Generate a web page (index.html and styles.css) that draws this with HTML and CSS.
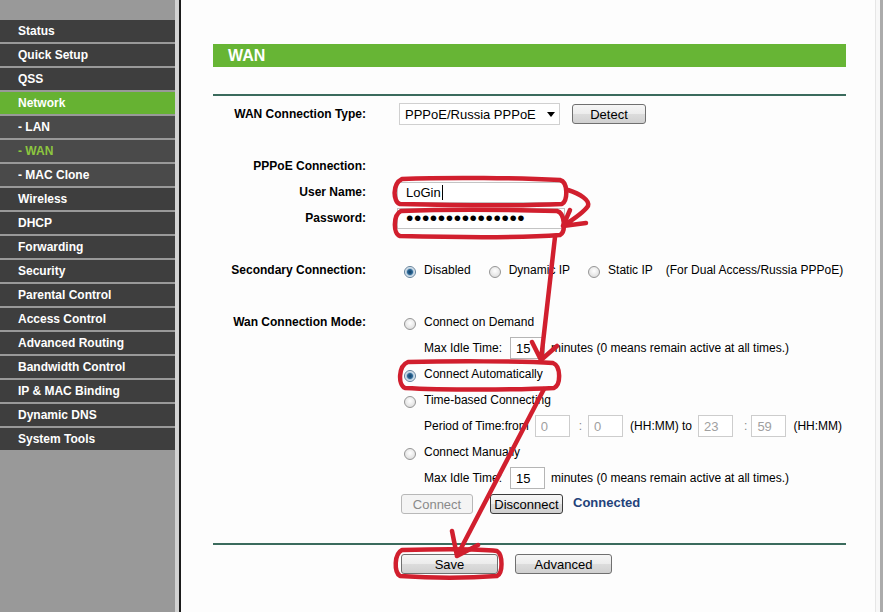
FILE: index.html
```html
<!DOCTYPE html>
<html lang="en">
  <head>
    <meta charset="UTF-8" />
    <meta name="viewport" content="width=device-width, initial-scale=1.0" />
    <title>WAN</title>
    <link rel="stylesheet" href="styles.css">
  </head>
  <body>
    <div class="page">
      <div class="sidebar">
        <ul class="menu">
          <li>Status</li>
          <li>Quick Setup</li>
          <li>QSS</li>
          <li class="open">Network</li>
          <li class="sub">- LAN</li>
          <li class="sub current">- WAN</li>
          <li class="sub">- MAC Clone</li>
          <li>Wireless</li>
          <li>DHCP</li>
          <li>Forwarding</li>
          <li>Security</li>
          <li>Parental Control</li>
          <li>Access Control</li>
          <li>Advanced Routing</li>
          <li>Bandwidth Control</li>
          <li>IP &amp; MAC Binding</li>
          <li>Dynamic DNS</li>
          <li>System Tools</li>
        </ul>
      </div>

      <div class="main">
        <div class="panel">
          <div class="title">WAN</div>
          <div class="rule"></div>

          <div class="form">
            <div class="label">WAN Connection Type:</div>
            <div class="field">
              <div class="select">
                <span>PPPoE/Russia PPPoE</span>
                <svg width="8" height="5" viewBox="0 0 8 5"><path d="M0 0h8L4 5z" fill="#000"/></svg>
              </div>
              <button class="btn detect">Detect</button>
            </div>

            <div class="gap"></div>

            <div class="label">PPPoE Connection:</div>
            <div class="field"></div>

            <div class="label">User Name:</div>
            <div class="field">
              <div class="text-input">LoGin<span class="cursor"></span></div>
            </div>

            <div class="label">Password:</div>
            <div class="field">
              <input class="text-input password" type="password" value="passwordpasswor" />
            </div>

            <div class="gap"></div>

            <div class="label">Secondary Connection:</div>
            <div class="field">
              <label class="choice"><input class="radio" type="radio" name="second" checked />Disabled</label>
              <label class="choice"><input class="radio" type="radio" name="second" />Dynamic IP</label>
              <label class="choice"><input class="radio" type="radio" name="second" />Static IP</label>
              <span>(For Dual Access/Russia PPPoE)</span>
            </div>

            <div class="gap"></div>

            <div class="label">Wan Connection Mode:</div>
            <div class="field">
              <label class="choice"><input class="radio" type="radio" name="mode" />Connect on Demand</label>
            </div>
            <div class="field indent">
              Max Idle Time:<input class="num" type="text" value="15" />minutes (0 means remain active at all times.)
            </div>
            <div class="field">
              <label class="choice"><input class="radio" type="radio" name="mode" checked />Connect Automatically</label>
            </div>
            <div class="field">
              <label class="choice"><input class="radio" type="radio" name="mode" />Time-based Connecting</label>
            </div>
            <div class="field indent">
              Period of Time:from<input class="num from-h" type="text" value="0" disabled />
              <span class="colon">:</span><input class="num from-m" type="text" value="0" disabled />
              (HH:MM) to<input class="num to-h" type="text" value="23" disabled />
              <span class="colon">:</span><input class="num to-m" type="text" value="59" disabled />
              (HH:MM)
            </div>
            <div class="field">
              <label class="choice"><input class="radio" type="radio" name="mode" />Connect Manually</label>
            </div>
            <div class="field indent">
              Max Idle Time:<input class="num" type="text" value="15" />minutes (0 means remain active at all times.)
            </div>
            <div class="field">
              <button class="btn connect" disabled>Connect</button>
              <button class="btn disconnect">Disconnect</button>
              <span class="status">Connected</span>
            </div>
          </div>

          <div class="rule bottom"></div>

          <div class="actions">
            <button class="btn save">Save</button>
            <button class="btn advanced">Advanced</button>
          </div>
        </div>
      </div>

      <div class="edge"></div>
    </div>

    <!-- red hand-drawn marks over the form -->
    <svg class="marks" width="883" height="612" viewBox="0 0 883 612">
      <g fill="none" stroke="#d11f2e" stroke-width="4.5" stroke-linecap="round" stroke-linejoin="round">
        <path d="M402 179 C450 177 520 178 560 180 C568 182 568 200 562 204 C520 206 440 205 400 204 C393 202 392 184 402 179 Z"/>
        <path d="M568 190 C580 194 590 200 588 206 C584 212 574 219 563 226 M563 226 L586 223 M563 226 L570 210"/>
        <path d="M401 211 C450 209 520 210 557 211 C565 213 566 232 560 235 C520 238 440 237 400 236 C393 234 393 215 401 211 Z"/>
        <path d="M555 237 L541 360 M541 360 L532 342 M541 360 L557 346"/>
        <path d="M408 362 C450 361 520 361 553 363 C561 366 561 385 554 388 C520 390 440 390 405 388 C398 385 398 366 408 362 Z"/>
        <path d="M544 389 L457 556 M457 556 L452 531 M457 556 L478 545"/>
        <path d="M402 550 C440 549 480 549 497 551 C503 555 503 573 497 576 C470 578 430 578 400 576 C394 572 394 554 402 550 Z"/>
      </g>
    </svg>
  </body>
</html>
```

FILE: styles.css
```css
body {
  margin: 0;
  font-family: "Liberation Sans", Arial, sans-serif;
  font-size: 12px;
  color: #000;
  background: #fdfdfd;
}

.page {
  display: flex;
  height: 612px;
  overflow: hidden;
}

.sidebar {
  width: 175px;
  flex: none;
  background: #999;
  border-right: 4px solid #d2d2d2;
}

.menu {
  list-style: none;
  margin: 0;
  padding: 20px 0 0;
}

.menu li {
  height: 22px;
  line-height: 22px;
  margin-bottom: 2px;
  padding-left: 18px;
  background: #3e3e3e;
  color: #fff;
  font-weight: bold;
}

.menu li.sub {
  background: #4a4a4a;
}

.menu li.open {
  background: #66b232;
}

.menu li.current {
  color: #8dc63f;
}

.main {
  flex: 1;
  border-left: 2px solid #1c1c1c;
  background: #fdfdfd;
}

.edge {
  width: 4px;
  flex: none;
  border-left: 1px solid #e6e6e6;
  border-right: 3px solid #ababab;
  background: #f8f8f8;
}

.panel {
  width: 633px;
  margin: 44px 0 0 32px;
}

.title {
  height: 23px;
  line-height: 23px;
  padding-left: 15px;
  background: #67b535;
  color: #fff;
  font-weight: bold;
  font-size: 16px;
}

.rule {
  height: 2px;
  margin-top: 27px;
  background: #3b6b5d;
}

.rule.bottom {
  margin-top: 26px;
}

.form {
  display: grid;
  grid-template-columns: 153px 1fr;
  grid-auto-rows: 26px;
  column-gap: 33px;
  margin-top: 5px;
}

.label {
  grid-column: 1;
  align-self: center;
  text-align: right;
  font-weight: bold;
}

.field {
  grid-column: 2;
  display: flex;
  align-items: center;
  white-space: nowrap;
}

.field.indent {
  padding-left: 25px;
}

.gap {
  grid-column: 1 / -1;
}

.select {
  width: 161px;
  height: 22px;
  box-sizing: border-box;
  display: flex;
  align-items: center;
  justify-content: space-between;
  padding: 0 4px 0 5px;
  border: 1px solid #d0d0d0;
  background: #fff;
  font-size: 13px;
}

.text-input {
  width: 168px;
  height: 21px;
  box-sizing: border-box;
  display: flex;
  align-items: center;
  margin-left: -2px;
  padding: 0 0 0 8px;
  border: 1px solid #c4c4c4;
  background: #fff;
  font: 13px "Liberation Sans", Arial, sans-serif;
}

.cursor {
  width: 1px;
  height: 15px;
  margin-left: 1px;
  background: #000;
}

.password {
  font-size: 21px;
  letter-spacing: 0.6px;
  outline: none;
}

.choice {
  display: flex;
  align-items: center;
  margin-right: 13px;
}

.radio {
  appearance: none;
  width: 12px;
  height: 12px;
  flex: none;
  margin: 4px 8px 0 5px;
  border: 1px solid #959595;
  border-radius: 50%;
  background: radial-gradient(circle at 50% 40%, #fff, #d6d6d6);
}

.radio:checked {
  border-color: #61809a;
  background: radial-gradient(circle, #143f66 0, #2c6896 2.5px, #b3cadd 3.6px, #eef3f7 5px);
}

.num {
  width: 35px;
  height: 22px;
  box-sizing: border-box;
  margin: 0 6px 0 8px;
  padding: 0 0 0 5px;
  border: 1px solid #b5b5b5;
  background: #fff;
  font: 13px "Liberation Sans", Arial, sans-serif;
  color: #000;
}

.num:disabled {
  color: #a0a0a0;
  border-color: #cdcdcd;
  background: #fff;
}

.num.from-h {
  margin: 0 6px 0 6px;
}

.num.from-m {
  margin: 0 7px 0 6px;
}

.num.to-h {
  margin: 0 8px 0 6px;
}

.num.to-m {
  margin: 0 7px 0 4px;
}

.colon {
  color: #888;
  margin-left: 3px;
}

.btn {
  height: 20px;
  box-sizing: border-box;
  padding: 0;
  border: 1px solid #707070;
  border-radius: 3px;
  background: linear-gradient(#f6f6f6, #ececec 48%, #dcdcdc 52%, #d0d0d0);
  font: 13px "Liberation Sans", Arial, sans-serif;
  color: #000;
}

.detect {
  width: 74px;
  margin-left: 12px;
}

.connect {
  width: 72px;
  margin-left: 2px;
  border-color: #b8b8b8;
  background: #f4f4f4;
  color: #8a8a8a;
}

.disconnect {
  width: 73px;
  margin-left: 17px;
  border-color: #3c3c3c;
}

.status {
  margin-left: 10px;
  margin-top: -4px;
  font-weight: bold;
  font-size: 13px;
  color: #23427a;
}

.actions {
  display: flex;
  margin-top: 9px;
  padding-left: 188px;
}

.save {
  width: 97px;
}

.advanced {
  width: 97px;
  margin-left: 17px;
}

.marks {
  position: absolute;
  top: 0;
  left: 0;
  pointer-events: none;
}
```
